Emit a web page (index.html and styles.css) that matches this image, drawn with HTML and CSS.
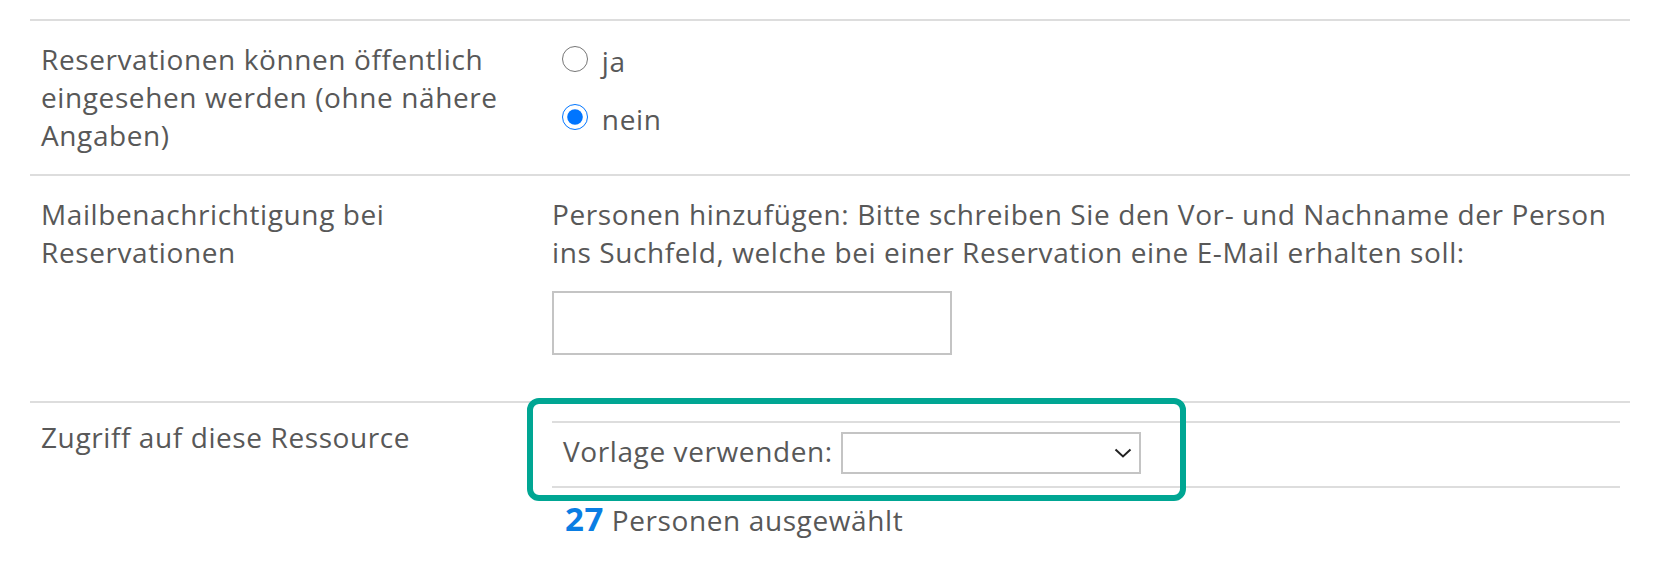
FILE: index.html
```html
<!DOCTYPE html>
<html lang="de">
<head>
<meta charset="utf-8">
<title>Ressource bearbeiten</title>
<link rel="stylesheet" href="styles.css">
</head>
<body>
<div class="page">
  <div class="settings">
    <div class="row">
      <div class="label">Reservationen können öffentlich eingesehen werden (ohne nähere Angaben)</div>
      <div class="field">
        <label class="option"><input class="radio" type="radio" name="public"> ja</label>
        <label class="option option-next"><input class="radio" type="radio" name="public" checked> nein</label>
      </div>
    </div>
    <div class="row">
      <div class="label">Mailbenachrichtigung bei Reservationen</div>
      <div class="field">
        <p class="hint">Personen hinzufügen: Bitte schreiben Sie den Vor- und Nachname der Person ins Suchfeld, welche bei einer Reservation eine E-Mail erhalten soll:</p>
        <input class="search" type="text" aria-label="Person suchen">
      </div>
    </div>
    <div class="row">
      <div class="label label-tight">Zugriff auf diese Ressource</div>
      <div class="field field-access">
        <div class="template-row">
          <span class="template-label">Vorlage verwenden:</span>
          <span class="select-wrap">
            <select class="select" aria-label="Vorlage"><option></option></select>
            <svg class="chevron" width="18" height="10" viewBox="0 0 18 10"><path d="M1.5 1.5 L9 8.5 L16.5 1.5" fill="none" stroke="#222" stroke-width="2"/></svg>
          </span>
        </div>
        <div class="count"><span class="count-num">27</span> Personen ausgewählt</div>
        <div class="highlight"></div>
      </div>
    </div>
  </div>
</div>
</body>
</html>
```
FILE: styles.css
```css
html, body {
  margin: 0;
  padding: 0;
  background: #fff;
}
body {
  font-family: "Open Sans", "Noto Sans", sans-serif;
  font-size: 28px;
  line-height: 38px;
  letter-spacing: 0.6px;
  color: #585858;
}
.page {
  padding: 19px 0 0 30px;
}
.settings {
  width: 1600px;
}
.row {
  display: grid;
  grid-template-columns: 512px 1fr;
  border-top: 2px solid #dddddd;
}
.label {
  padding: 19px 20px 20px 11px;
}
.label-tight {
  padding-top: 15px;
}
.field {
  padding: 19px 10px 20px 10px;
}
.option {
  display: block;
}
.option-next {
  margin-top: 18px;
}
.radio {
  width: 26px;
  height: 26px;
  margin: 6px 6px 0 10px;
  accent-color: #0075ff;
}
.hint {
  margin: 0;
}
.search {
  display: block;
  box-sizing: border-box;
  width: 400px;
  height: 64px;
  margin: 20px 0 26px 0;
  border: 2px solid #c4c4c4;
  border-radius: 0;
  font: inherit;
}
.field-access {
  position: relative;
  padding-top: 18px;
}
.template-row {
  display: flex;
  align-items: center;
  gap: 8px;
  border-top: 2px solid #dddddd;
  border-bottom: 2px solid #dddddd;
  padding: 9px 11px 12px 11px;
}
.template-label {
  margin-bottom: 4px;
}
.select-wrap {
  display: inline-flex;
  align-items: center;
  box-sizing: border-box;
  width: 300px;
  height: 42px;
  border: 2px solid #c4c4c4;
  background: #fff;
}
.select {
  appearance: none;
  -webkit-appearance: none;
  flex: 1;
  height: 100%;
  border: 0;
  background: transparent;
  font: inherit;
  outline: none;
}
.chevron {
  margin-right: 7px;
  flex: none;
}
.count {
  margin-top: 12px;
  padding-left: 13px;
}
.count-num {
  color: #0a7de3;
  font-weight: 700;
  font-size: 33px;
}
.highlight {
  position: absolute;
  left: -15px;
  top: -5px;
  width: 659px;
  height: 103px;
  box-sizing: border-box;
  border: 6px solid #00a693;
  border-radius: 12px;
  pointer-events: none;
}
```
